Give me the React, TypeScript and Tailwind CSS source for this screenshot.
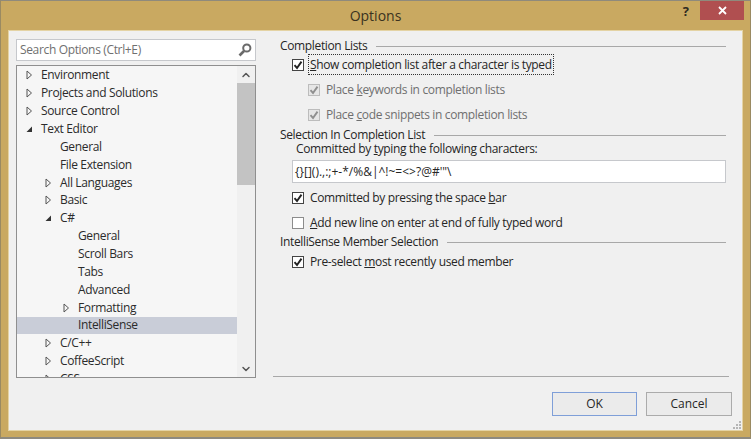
import { ChevronDown, ChevronUp } from 'lucide-react';
import type { ReactNode } from 'react';

const FONT = "font-['Open_Sans','Noto_Sans',sans-serif]";

type Arrow = 'closed' | 'open' | 'none';

const treeRows: { label: string; indent: number; arrow: Arrow; selected?: boolean }[] = [
  { label: 'Environment', indent: 0, arrow: 'closed' },
  { label: 'Projects and Solutions', indent: 0, arrow: 'closed' },
  { label: 'Source Control', indent: 0, arrow: 'closed' },
  { label: 'Text Editor', indent: 0, arrow: 'open' },
  { label: 'General', indent: 1, arrow: 'none' },
  { label: 'File Extension', indent: 1, arrow: 'none' },
  { label: 'All Languages', indent: 1, arrow: 'closed' },
  { label: 'Basic', indent: 1, arrow: 'closed' },
  { label: 'C#', indent: 1, arrow: 'open' },
  { label: 'General', indent: 2, arrow: 'none' },
  { label: 'Scroll Bars', indent: 2, arrow: 'none' },
  { label: 'Tabs', indent: 2, arrow: 'none' },
  { label: 'Advanced', indent: 2, arrow: 'none' },
  { label: 'Formatting', indent: 2, arrow: 'closed' },
  { label: 'IntelliSense', indent: 2, arrow: 'none', selected: true },
  { label: 'C/C++', indent: 1, arrow: 'closed' },
  { label: 'CoffeeScript', indent: 1, arrow: 'closed' },
  { label: 'CSS', indent: 1, arrow: 'closed' },
];

function TreeArrow({ kind }: { kind: Arrow }) {
  if (kind === 'none') return <span className="w-[7px] shrink-0" />;
  if (kind === 'open') {
    return (
      <svg width="7" height="8" viewBox="0 0 7 8" className="shrink-0">
        <path d="M6 1.5V7H0.5Z" fill="#333" />
      </svg>
    );
  }
  return (
    <svg width="7" height="10" viewBox="0 0 7 10" className="shrink-0">
      <path d="M1 1L5.5 5L1 9Z" fill="none" stroke="#555" strokeWidth="1" />
    </svg>
  );
}

function TreeRow({ label, indent, arrow, selected }: (typeof treeRows)[number]) {
  const pad = indent === 0 ? 'pl-[9px]' : indent === 1 ? 'pl-[28px]' : 'pl-[46px]';
  return (
    <div className={`flex h-[17.86px] shrink-0 items-center gap-[8px] ${pad} ${selected ? 'bg-[#c9cdd8]' : ''}`}>
      <TreeArrow kind={arrow} />
      <span className="text-[#2b2b2b]">{label}</span>
    </div>
  );
}

function SearchIcon() {
  return (
    <svg width="14" height="14" viewBox="0 0 14 14">
      <circle cx="8.8" cy="5" r="3.6" fill="none" stroke="#6a6a6a" strokeWidth="2" />
      <path d="M6 8L1.5 12.5" stroke="#6a6a6a" strokeWidth="2.6" />
    </svg>
  );
}

function Check({ checked, disabled }: { checked: boolean; disabled?: boolean }) {
  const border = disabled ? 'border-[#bcbcbc] bg-[#e6e6e6]' : checked ? 'border-[#444] bg-white' : 'border-[#8c8c8c] bg-white';
  return (
    <span className={`flex h-[12px] w-[12px] shrink-0 items-center justify-center border ${border}`}>
      {checked && (
        <svg width="10" height="10" viewBox="0 0 10 10">
          <path d="M1.5 5.2L4 8L8.5 1.6" fill="none" stroke={disabled ? '#8f8f8f' : '#222'} strokeWidth="1.9" />
        </svg>
      )}
    </span>
  );
}

function SectionHead({ children, mt }: { children: ReactNode; mt: string }) {
  return (
    <div className={`flex h-[14px] items-center gap-[9px] leading-[14px] ${mt}`}>
      <span className="whitespace-nowrap text-[#262626]">{children}</span>
      <span className="h-px flex-1 bg-[#a8a8a8]" />
    </div>
  );
}

function CheckRow({
  checked,
  disabled,
  pl,
  mt,
  children,
}: {
  checked: boolean;
  disabled?: boolean;
  pl: string;
  mt: string;
  children: ReactNode;
}) {
  return (
    <div className={`flex h-[16px] items-center gap-[6px] ${pl} ${mt}`}>
      <Check checked={checked} disabled={disabled} />
      <span className={`whitespace-nowrap ${disabled ? 'text-[#6f6f6f]' : 'text-[#262626]'}`}>{children}</span>
    </div>
  );
}

export default function App() {
  return (
    <div className={`${FONT} flex h-[439px] w-[751px] flex-col overflow-hidden border-x border-t border-b-2 border-x-[#9a8a62] border-t-[#8f8a7c] border-b-[#8d8a80] bg-[#c9a961] text-[12px] leading-none tracking-[-0.35px]`}>
      {/* barre de titre */}
      <div className="relative flex h-[29px] shrink-0 items-center justify-center text-[14px] tracking-normal text-[#3a3220]">
        Options
        <span className="absolute top-[4px] right-[61px] text-[13px] font-bold text-[#2e2a20]">?</span>
        <div className="absolute top-0 right-[6px] flex h-[19px] w-[44px] items-center justify-center bg-[#b04f50]">
          <svg width="9" height="9" viewBox="0 0 9 9">
            <path d="M1 1L8 8M8 1L1 8" stroke="#fff" strokeWidth="1.8" />
          </svg>
        </div>
      </div>

      <div className="relative mx-[7px] mb-[6px] flex min-h-0 flex-1 border border-[#e4d3a4] bg-[#f0f0f0]">
        {/* colonne gauche */}
        <div className="flex w-[263px] shrink-0 flex-col pt-[8px] pl-[7px]">
          <div className="flex h-[22px] w-[240px] items-center justify-between border border-[#c6c8cc] bg-white pr-[3px] pl-[3px] text-[#6f6f6f]">
            <span>Search Options (Ctrl+E)</span>
            <SearchIcon />
          </div>
          <div className="mt-[4px] flex h-[313px] w-[240px] overflow-hidden border border-[#8f8f8f] bg-[#f6f6f6]">
            <div className="flex min-w-0 flex-1 flex-col overflow-hidden pt-[0.5px]">
              {treeRows.map((row, i) => (
                <TreeRow key={i} {...row} />
              ))}
            </div>
            <div className="flex w-[18px] shrink-0 flex-col items-center bg-[#f0f0f0]">
              <div className="flex h-[17px] shrink-0 items-center justify-center">
                <ChevronUp size={12} strokeWidth={3} color="#555" />
              </div>
              <div className="h-[102px] w-full bg-[#c3c3c3]" />
              <div className="flex-1" />
              <div className="flex h-[17px] shrink-0 items-center justify-center">
                <ChevronDown size={12} strokeWidth={3} color="#555" />
              </div>
            </div>
          </div>
        </div>

        {/* colonne droite */}
        <div className="ml-px flex min-w-0 flex-1 flex-col pr-[13px]">
          <div className="flex flex-1 flex-col pt-[8px] pr-[3px] pl-[7px]">
            <SectionHead mt="">Completion Lists</SectionHead>
            <CheckRow checked pl="pl-[12px]" mt="mt-[4px]">
              <span className="outline-1 outline-offset-1 outline-[#333] outline-dotted">
                <u>S</u>how completion list after a character is typed
              </span>
            </CheckRow>
            <CheckRow checked disabled pl="pl-[28px]" mt="mt-[9px]">
              Place <u>k</u>eywords in completion lists
            </CheckRow>
            <CheckRow checked disabled pl="pl-[28px]" mt="mt-[9px]">
              Place <u>c</u>ode snippets in completion lists
            </CheckRow>
            <SectionHead mt="mt-[5px]">Selection In Completion List</SectionHead>
            <div className="h-[14px] pl-[16px] leading-[14px] whitespace-nowrap text-[#262626]">
              Committed by <u>t</u>yping the following characters:
            </div>
            <div className="mt-[4px] ml-[12px] flex h-[23px] items-center border border-[#c6c8cc] bg-white pl-[2px] tracking-normal text-[#262626]">
              {'{}[]().,:;+-*/%&|^!~=<>?@#\'"\\'}
            </div>
            <CheckRow checked pl="pl-[12px]" mt="mt-[7px]">
              Committed by pressing the space <u>b</u>ar
            </CheckRow>
            <CheckRow checked={false} pl="pl-[12px]" mt="mt-[9px]">
              <u>A</u>dd new line on enter at end of fully typed word
            </CheckRow>
            <SectionHead mt="mt-[4px]">IntelliSense Member Selection</SectionHead>
            <CheckRow checked pl="pl-[12px]" mt="mt-[5px]">
              Pre-select <u>m</u>ost recently used member
            </CheckRow>
          </div>
          <div className="mb-[15px] h-px bg-[#a8a8a8]" />
          <div className="mr-[-3px] mb-[14px] flex justify-end gap-[9px] tracking-normal text-[#262626]">
            <button className="h-[24px] w-[85px] border border-[#7f9fd8] bg-[#ebebeb]">OK</button>
            <button className="h-[24px] w-[86px] border border-[#ababab] bg-[#ebebeb]">Cancel</button>
          </div>
        </div>

        {/* poignée de redimensionnement */}
        <svg width="9" height="8" viewBox="0 0 9 8" className="absolute right-px bottom-px">
          <path d="M7 0h2v2H7zM4 3h2v2H4zM7 3h2v2H7zM1 6h2v2H1zM4 6h2v2H4zM7 6h2v2H7z" fill="#b5b5b5" />
        </svg>
      </div>
    </div>
  );
}
